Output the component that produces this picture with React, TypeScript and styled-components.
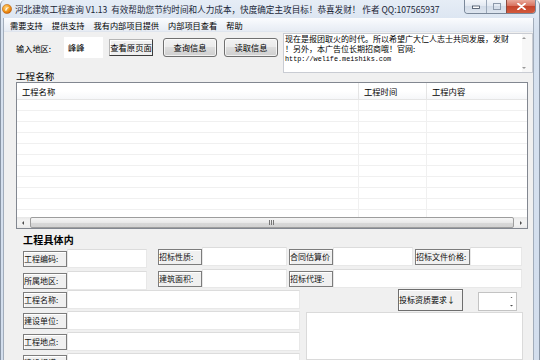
import React from "react";
import styled, { createGlobalStyle } from "styled-components";

const cjk = `"Noto Sans CJK SC", "Noto Sans", sans-serif`;

const GlobalStyle = createGlobalStyle`
  html, body { margin: 0; padding: 0; background: #fff; }
  body { font-family: ${cjk}; }
  * { box-sizing: border-box; }
`;

const Window = styled.div`
  width: 540px;
  height: 360px;
  overflow: hidden;
  display: flex;
  flex-direction: column;
  background: linear-gradient(#e6edf6, #d6e1ef 30px, #d3deed);
  border-left: 1px solid #8995a5;
  border-right: 1px solid #8995a5;
  border-top-left-radius: 5px;
  border-top-right-radius: 5px;
  font-family: ${cjk};
  color: #000;
`;

const TitleBar = styled.div`
  height: 18px;
  flex: none;
  display: flex;
  align-items: center;
`;

const TitleText = styled.div`
  margin-left: 3px;
  font-size: 8.6px;
  line-height: 18px;
  white-space: nowrap;
  color: #1b2738;
`;

const Caption = styled.div`
  margin-left: auto;
  margin-right: 3px;
  align-self: flex-start;
  display: flex;
  height: 14px;
  border: 1px solid #7a889a;
  border-top: none;
  border-radius: 0 0 4px 4px;
  overflow: hidden;
`;

const CapButton = styled.div<{ $w: number; $close?: boolean }>`
  width: ${(p) => p.$w}px;
  height: 100%;
  display: flex;
  align-items: center;
  justify-content: center;
  border-left: ${(p) => (p.$close ? "1px solid #8a4a3e" : "1px solid #9aa7b8")};
  background: ${(p) =>
    p.$close
      ? "linear-gradient(#e9a99b, #d8725e 45%, #c5452d 50%, #d35a3c)"
      : "linear-gradient(#f3f6fa, #e3e9f2 45%, #d3dce8 50%, #dde5ef)"};
  &:first-child { border-left: none; }
`;

const Frame = styled.div`
  flex: 1;
  display: flex;
  flex-direction: column;
  margin: 0 5px 0 2px;
  border-left: 1px solid #a2adbb;
  border-right: 1px solid #a2adbb;
  min-height: 0;
`;

const MenuBar = styled.div`
  height: 14px;
  flex: none;
  display: flex;
  align-items: center;
  padding-left: 1.5px;
  background: linear-gradient(#fbfcfe, #eef2f8 60%, #e7ecf4);
  border-bottom: 1px solid #dfe5ee;
`;

const MenuItem = styled.div`
  padding: 0 4.5px;
  font-size: 8.2px;
  line-height: 14px;
  white-space: nowrap;
`;

const Client = styled.div`
  flex: 1;
  min-height: 0;
  background: #f0f0f0;
  padding-left: 12px;
  display: flex;
  flex-direction: column;
`;

const TopRow = styled.div`
  display: flex;
  align-items: flex-start;
  height: 40px;
  margin-top: 1px;
  flex: none;
`;

const SearchGroup = styled.div`
  display: flex;
  align-items: center;
  height: 21px;
  margin-top: 4px;
`;

const PlainLabel = styled.div<{ $w: number }>`
  width: ${(p) => p.$w}px;
  font-size: 8.2px;
  white-space: nowrap;
`;

const AreaInput = styled.div`
  width: 39px;
  height: 21px;
  background: #fff;
  padding-left: 4px;
  font-size: 8.2px;
  line-height: 21px;
`;

const FlatButton = styled.div`
  margin-left: 6px;
  width: 44px;
  height: 17px;
  background: #f0f0f0;
  border: 1px solid #b5b5b5;
  border-right-color: #3c3c3c;
  border-bottom-color: #3c3c3c;
  box-shadow: inset 1px 1px 0 #fff;
  font-size: 8.3px;
  line-height: 14px;
  text-align: center;
  white-space: nowrap;
  overflow: hidden;
`;

const AeroButton = styled.div<{ $ml: number }>`
  margin-left: ${(p) => p.$ml}px;
  width: 54px;
  height: 19px;
  border: 1px solid #707070;
  border-radius: 3px;
  background: linear-gradient(#f2f2f2, #ebebeb 45%, #dddddd 50%, #cfcfcf);
  box-shadow: inset 0 0 0 1px rgba(255, 255, 255, 0.7);
  font-size: 8.2px;
  line-height: 17px;
  text-align: center;
  white-space: nowrap;
`;

const Notice = styled.div`
  margin-left: 5px;
  width: 250px;
  height: 40px;
  background: #fff;
  border: 1px solid #c9ccd3;
  display: flex;
`;

const NoticeText = styled.div`
  flex: 1;
  padding: 0 0 0 1px;
  font-size: 8px;
  line-height: 10px;
  white-space: nowrap;
`;

const NoticeUrl = styled.div`
  font-family: "Liberation Mono", "DejaVu Sans Mono", monospace;
  font-size: 6.8px;
  line-height: 10px;
`;

const VScroll = styled.div`
  width: 10px;
  display: flex;
  flex-direction: column;
  justify-content: space-between;
  background: #f7f7f7;
  padding: 3px 0 3px;
`;

const SectionLabel = styled.div`
  margin-top: -1px;
  font-size: 9.6px;
  line-height: 9px;
  height: 9px;
  flex: none;
`;

const ListView = styled.div`
  margin-top: 1px;
  width: 512px;
  height: 147px;
  flex: none;
  border: 1px solid #828790;
  background: #fff;
  display: flex;
  flex-direction: column;
`;

const HeaderRow = styled.div`
  height: 17px;
  flex: none;
  display: flex;
  border-bottom: 1px solid #e5e5e5;
  background: linear-gradient(#fff, #fff 50%, #f6f7f9);
`;

const HeaderCell = styled.div<{ $w?: number }>`
  width: ${(p) => (p.$w ? `${p.$w}px` : "auto")};
  flex: ${(p) => (p.$w ? "none" : "1")};
  padding-left: 5px;
  font-size: 8.3px;
  line-height: 16px;
  border-right: ${(p) => (p.$w ? "1px solid #e5e5e5" : "none")};
  white-space: nowrap;
`;

const ListBody = styled.div`
  flex: 1;
  display: flex;
  background: repeating-linear-gradient(#fff 0, #fff 10px, #f0f0f0 10px, #f0f0f0 11px);
`;

const BodyCol = styled.div<{ $w?: number }>`
  width: ${(p) => (p.$w ? `${p.$w}px` : "auto")};
  flex: ${(p) => (p.$w ? "none" : "1")};
  border-right: ${(p) => (p.$w ? "1px solid #f0f0f0" : "none")};
`;

const HScroll = styled.div`
  height: 11px;
  flex: none;
  display: flex;
  align-items: stretch;
  background: linear-gradient(#e6e6e6, #f2f2f2 30%, #f2f2f2 70%, #e9e9e9);
`;

const ScrollArrow = styled.div`
  width: 12px;
  display: flex;
  align-items: center;
  justify-content: center;
`;

const Thumb = styled.div`
  flex: 1;
  margin: 0 1px;
  border: 1px solid #9d9d9d;
  border-radius: 2px;
  background: linear-gradient(#f6f6f6, #e9e9e9 50%, #d9d9d9 50%, #d2d2d2);
  display: flex;
  align-items: center;
  justify-content: center;
`;

const Group = styled.div`
  margin-top: 5px;
  flex: 1;
  min-height: 0;
  padding-left: 7px;
  display: flex;
  flex-direction: column;
`;

const GroupTitle = styled.div`
  font-size: 10px;
  font-weight: bold;
  line-height: 12px;
  height: 12px;
  letter-spacing: 0.2px;
`;

const FieldRow = styled.div`
  display: flex;
  align-items: flex-start;
  height: 21px;
  margin-top: 1px;
  flex: none;
`;

const FieldWrap = styled.div<{ $mt?: number; $ml?: number }>`
  display: flex;
  align-items: center;
  height: 19px;
  margin-top: ${(p) => p.$mt ?? 0}px;
  margin-left: ${(p) => p.$ml ?? 0}px;
`;

const LabelBox = styled.div<{ $w: number }>`
  width: ${(p) => p.$w}px;
  height: 16px;
  background: #f0f0f0;
  border: 1px solid #7c7c7c;
  box-shadow: inset 1px 1px 0 #fff;
  font-size: 8px;
  line-height: 14px;
  white-space: nowrap;
  overflow: hidden;
  color: #111;
`;

const TextBox = styled.div<{ $w: number }>`
  width: ${(p) => p.$w}px;
  height: 19px;
  background: #fff;
  border: 1px solid #e8e8e8;
  border-top-color: #dcdcdc;
`;

const Lower = styled.div`
  flex: 1;
  display: flex;
  min-height: 0;
`;

const LeftCol = styled.div`
  width: 277px;
  display: flex;
  flex-direction: column;
  gap: 2px;
`;

const RightCol = styled.div`
  margin-left: 6px;
  width: 217px;
  display: flex;
  flex-direction: column;
`;

const RightTools = styled.div`
  height: 22px;
  flex: none;
  display: flex;
  align-items: flex-start;
`;

const DropButton = styled.div`
  margin: -1px 0 0 92px;
  width: 65px;
  height: 22px;
  background: #f0f0f0;
  border: 1px solid #6e6e6e;
  box-shadow: inset 1px 1px 0 #fff;
  font-size: 8px;
  line-height: 20px;
  white-space: nowrap;
`;

const SpinBox = styled.div`
  margin: 2px 0 0 15px;
  width: 39px;
  height: 19px;
  background: #fff;
  border: 1px solid #c3c3c3;
  display: flex;
  justify-content: flex-end;
`;

const SpinArrows = styled.div`
  width: 9px;
  display: flex;
  flex-direction: column;
  justify-content: space-around;
  align-items: center;
`;

const Memo = styled.div`
  flex: 1;
  background: #fff;
  border: 1px solid #dadada;
`;

const Tri = ({ dir, size = 3, color = "#4d4d4d" }: { dir: "up" | "down" | "left" | "right"; size?: number; color?: string }) => {
  const s = size;
  const pts = {
    up: `0,${s} ${s},0 ${2 * s},${s}`,
    down: `0,0 ${2 * s},0 ${s},${s}`,
    left: `${s},0 ${s},${2 * s} 0,${s}`,
    right: `0,0 0,${2 * s} ${s},${s}`,
  }[dir];
  const w = dir === "up" || dir === "down" ? 2 * s : s;
  const h = dir === "up" || dir === "down" ? s : 2 * s;
  return (
    <svg width={w} height={h} viewBox={`0 0 ${w} ${h}`}>
      <polygon points={pts} fill={color} />
    </svg>
  );
};

const Field = ({ label, lw, iw, mt, ml }: { label: string; lw: number; iw: number; mt?: number; ml?: number }) => (
  <FieldWrap $mt={mt} $ml={ml}>
    <LabelBox $w={lw}>{label}</LabelBox>
    <TextBox $w={iw} />
  </FieldWrap>
);

const AppIcon = () => (
  <svg width="10" height="10" viewBox="0 0 10 10" style={{ marginLeft: 1, flex: "none" }}>
    <defs>
      <radialGradient id="ic" cx="40%" cy="35%" r="65%">
        <stop offset="0" stopColor="#ffd27a" />
        <stop offset="0.6" stopColor="#f39a1e" />
        <stop offset="1" stopColor="#d66a08" />
      </radialGradient>
    </defs>
    <circle cx="5" cy="5" r="4.6" fill="url(#ic)" stroke="#b35a0a" strokeWidth="0.5" />
    <path d="M3 6.6 C3.4 4.2 5.2 3 7 3.4 C5.6 4 4.6 5 4.4 6.8 Z" fill="#fff" opacity="0.9" />
  </svg>
);

const App: React.FC = () => (
  <>
    <GlobalStyle />
    <Window>
      <TitleBar>
        <AppIcon />
        <TitleText>
          河北建筑工程查询 V1.13&nbsp; 有效帮助您节约时间和人力成本，快度确定主攻目标！恭喜发财！ 作者 QQ:107565937
        </TitleText>
        <Caption>
          <CapButton $w={21}>
            <svg width="8" height="4" viewBox="0 0 8 4">
              <rect x="0.5" y="1" width="7" height="2.5" fill="#fff" stroke="#3d4a5c" strokeWidth="0.8" />
            </svg>
          </CapButton>
          <CapButton $w={20}>
            <svg width="8" height="7" viewBox="0 0 8 7">
              <rect x="0.5" y="0.5" width="7" height="6" fill="none" stroke="#8d99aa" strokeWidth="1" />
            </svg>
          </CapButton>
          <CapButton $w={29} $close>
            <svg width="9" height="7" viewBox="0 0 9 7">
              <path d="M1 0.5 L8 6.5 M8 0.5 L1 6.5" stroke="#fff" strokeWidth="1.8" strokeLinecap="round" />
            </svg>
          </CapButton>
        </Caption>
      </TitleBar>
      <Frame>
        <MenuBar>
          <MenuItem>需要支持</MenuItem>
          <MenuItem>提供支持</MenuItem>
          <MenuItem>我有内部项目提供</MenuItem>
          <MenuItem>内部项目查看</MenuItem>
          <MenuItem>帮助</MenuItem>
        </MenuBar>
        <Client>
          <TopRow>
            <SearchGroup>
              <PlainLabel $w={48}>输入地区:</PlainLabel>
              <AreaInput>峰峰</AreaInput>
              <FlatButton>查看原页面</FlatButton>
              <AeroButton $ml={10}>查询信息</AeroButton>
              <AeroButton $ml={7}>读取信息</AeroButton>
            </SearchGroup>
            <Notice>
              <NoticeText>
                <div>现在是报团取火的时代。所以希望广大仁人志士共同发展，发财</div>
                <div>！另外，本广告位长期招商哦！官网:</div>
                <NoticeUrl>http://welife.meishiks.com</NoticeUrl>
              </NoticeText>
              <VScroll>
                <Tri dir="up" size={2} color="#9a9a9a" />
                <Tri dir="down" size={2} color="#9a9a9a" />
              </VScroll>
            </Notice>
          </TopRow>
          <SectionLabel>工程名称</SectionLabel>
          <ListView>
            <HeaderRow>
              <HeaderCell $w={342}>工程名称</HeaderCell>
              <HeaderCell $w={68}>工程时间</HeaderCell>
              <HeaderCell>工程内容</HeaderCell>
            </HeaderRow>
            <ListBody>
              <BodyCol $w={342} />
              <BodyCol $w={68} />
              <BodyCol />
            </ListBody>
            <HScroll>
              <ScrollArrow>
                <Tri dir="left" size={2} />
              </ScrollArrow>
              <Thumb>
                <svg width="6" height="5" viewBox="0 0 6 5">
                  <path d="M0.5 0 V5 M2.5 0 V5 M4.5 0 V5" stroke="#777" strokeWidth="1" />
                </svg>
              </Thumb>
              <ScrollArrow>
                <Tri dir="right" size={2} />
              </ScrollArrow>
            </HScroll>
          </ListView>
          <Group>
            <GroupTitle>工程具体内</GroupTitle>
            <FieldRow>
              <Field label="工程编码:" lw={44} iw={80} mt={2} />
              <Field label="招标性质:" lw={44} iw={85} ml={11} />
              <Field label="合同估算价" lw={44} iw={80} ml={2} />
              <Field label="招标文件价格:" lw={55} iw={52} ml={2} />
            </FieldRow>
            <FieldRow>
              <Field label="所属地区:" lw={44} iw={80} mt={2} />
              <Field label="建筑面积:" lw={44} iw={85} ml={11} />
              <Field label="招标代理:" lw={44} iw={189} ml={2} />
            </FieldRow>
            <Lower>
              <LeftCol>
                <Field label="工程名称:" lw={44} iw={233} />
                <Field label="建设单位:" lw={44} iw={233} />
                <Field label="工程地点:" lw={44} iw={233} />
                <Field label="建设规模:" lw={44} iw={233} />
              </LeftCol>
              <RightCol>
                <RightTools>
                  <DropButton>投标资质要求↓</DropButton>
                  <SpinBox>
                    <SpinArrows>
                      <Tri dir="up" size={1.5} />
                      <Tri dir="down" size={1.5} />
                    </SpinArrows>
                  </SpinBox>
                </RightTools>
                <Memo />
              </RightCol>
            </Lower>
          </Group>
        </Client>
      </Frame>
    </Window>
  </>
);

export default App;
